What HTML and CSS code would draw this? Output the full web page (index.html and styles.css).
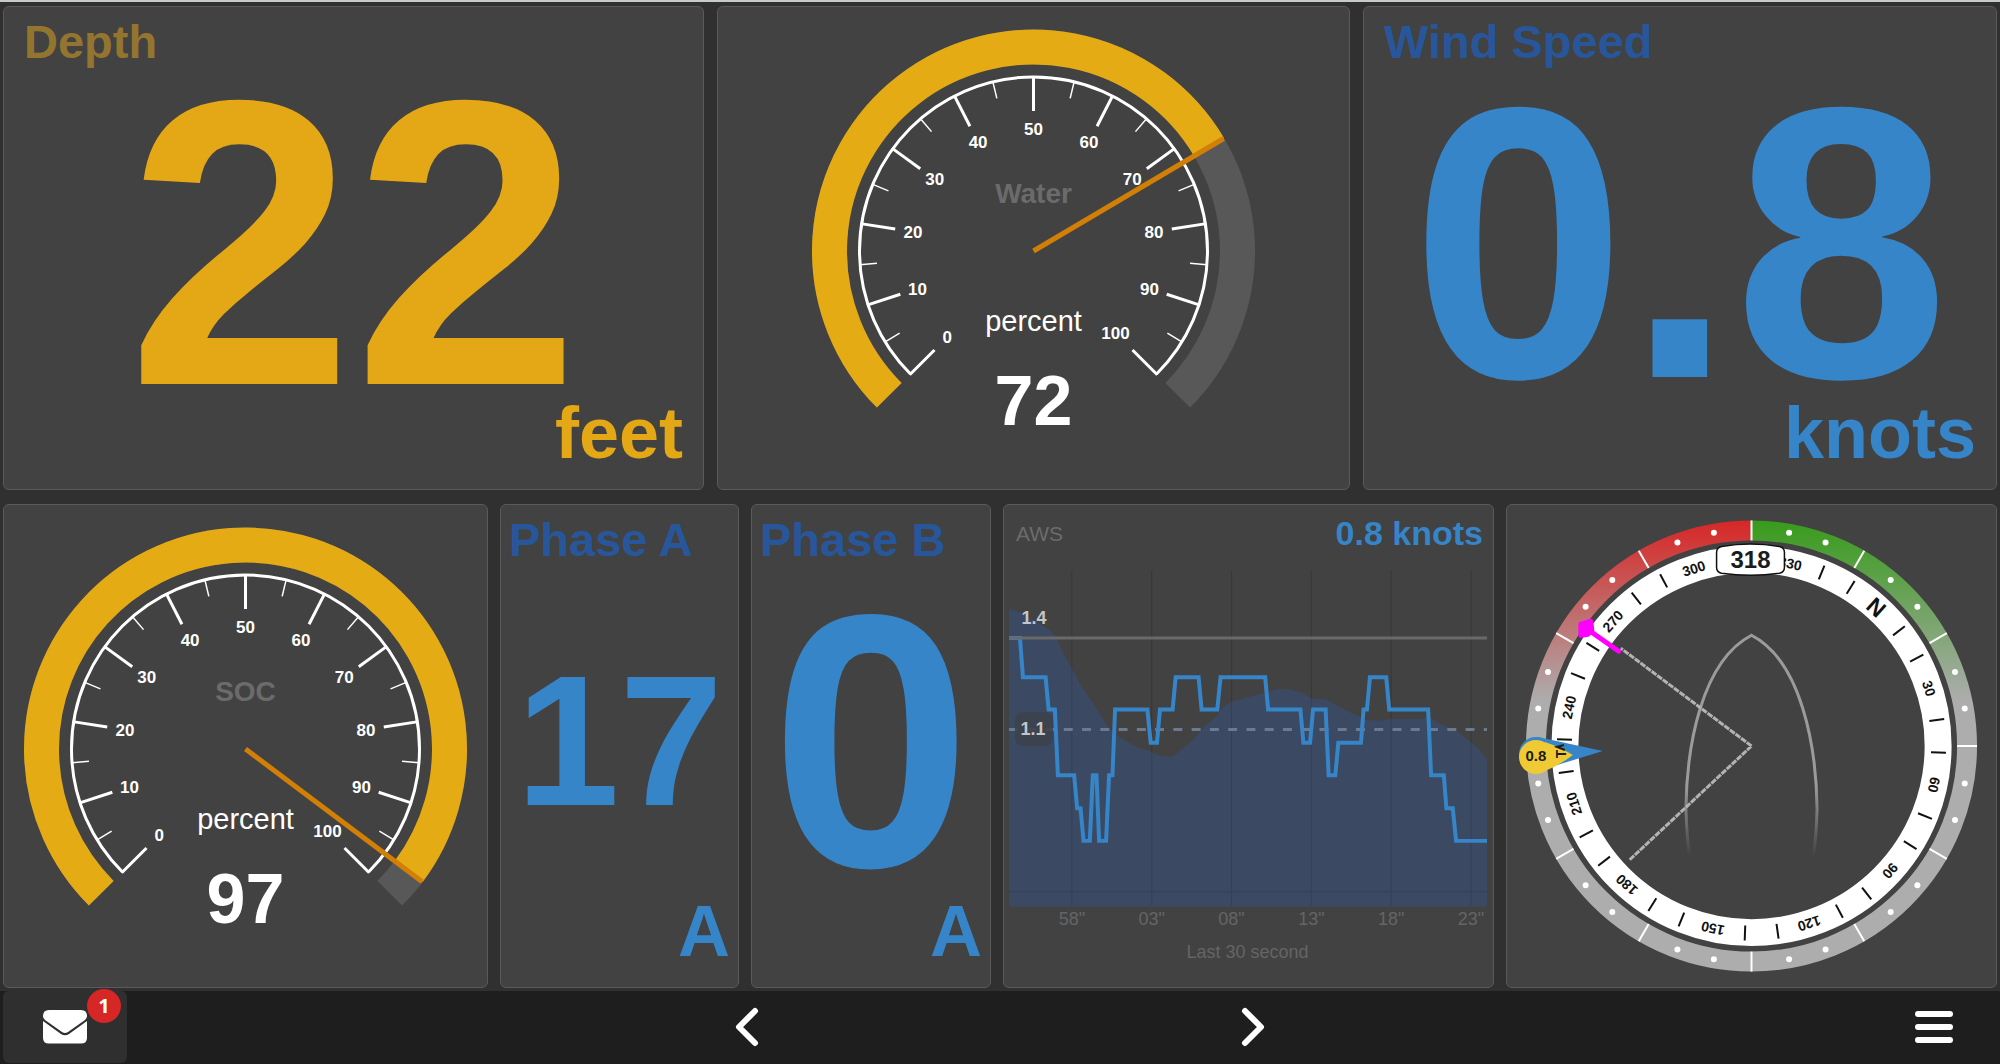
FILE: index.html
```html
<!DOCTYPE html>
<html lang="en">
<head>
    <meta charset="UTF-8">
    <meta name="viewport" content="width=device-width, initial-scale=1.0">
    <title>Boat Dashboard</title>
    <link rel="stylesheet" href="styles.css">
</head>
<body>
    <main class="dashboard">
        <div class="row row-top">
            <section class="tile numeric yellow">
                <h2 class="title">Depth</h2>
                <div class="value value-xl">22</div>
                <div class="unit">feet</div>
            </section>

            <section class="tile">
                <svg class="gauge" viewBox="-241 -244 482 482" data-title="Water" data-value="72"></svg>
            </section>

            <section class="tile numeric blue">
                <h2 class="title">Wind Speed</h2>
                <div class="value value-lg">0.8</div>
                <div class="unit">knots</div>
            </section>
        </div>

        <div class="row row-bottom">
            <section class="tile">
                <svg class="gauge" viewBox="-241 -244 482 482" data-title="SOC" data-value="97"></svg>
            </section>

            <section class="tile numeric small blue">
                <h2 class="title">Phase A</h2>
                <div class="value value-sm">17</div>
                <div class="unit">A</div>
            </section>

            <section class="tile numeric small blue">
                <h2 class="title">Phase B</h2>
                <div class="value value-md">0</div>
                <div class="unit">A</div>
            </section>

            <!-- Apparent wind speed history -->
            <section class="tile chart">
                <header class="chart-header">
                    <h2 class="chart-title">AWS</h2>
                    <span class="chart-value">0.8 knots</span>
                </header>
                <svg class="chart-plot" viewBox="0 0 490 417">
                    <g class="grid-lines">
                        <path d="M68 0V336M148 0V336M228 0V336M308 0V336M388 0V336M468 0V336M5 322H484"/>
                    </g>
                    <path class="area" d="M5 38.7L16 41.7L29 49L42.7 57.7L51 65L59 81.7L68 98.3L79 118L92.7 138L104 156.7L114 165.7L132.7 176.7L146 181L156 185.7L169 186.7L189 170L202.7 154.3L211 148.3L221 135.7L227.7 131.7L262.7 122.3L272.7 119L286 119L297.7 122.3L309.3 128.7L322.7 129L342.7 140L362.7 150L379.3 150.3L387.7 149L417.7 149L424.3 146.7L439.3 155L452.7 160L476 179L484 189V337H5Z"/>
                    <path class="area-grid" d="M68 98V336M148 182V336M228 132V336M308 128V336M388 149V336M468 173V336M5 322H484"/>
                    <path class="avg-line" d="M5 159.3H484"/>
                    <path class="line" d="M5 67.7H16L19 107H41.7L44.7 139.3H51L54 205.3H70.3L73.3 238.3H76.7L79.7 271H86L89 205.3H92.7L95.3 271H102.3L105.3 205.3H108.7L111.3 139.3H143.7L147 172.7H153.3L156.3 139.3H169L172 107H195L198 139.3H213.7L217 107H261.7L264.7 139.3H297L300 172.7H306.7L309.7 139.3H322.3L325.3 205.3H332L335 172.7H357.7L360.3 139.3H363.7L366.7 107H383L386 139.3H425L428 205.3H440.7L443.3 238.3H449.7L453 271H484"/>
                    <path class="max-line" d="M5 67.7H484"/>
                    <rect class="avg-box" x="11" y="142" width="38" height="34" rx="8"/>
                    <text class="mark" x="30" y="54">1.4</text>
                    <text class="mark" x="29" y="165">1.1</text>
                    <g class="axis">
                        <text x="68" y="355">58"</text>
                        <text x="148" y="355">03"</text>
                        <text x="228" y="355">08"</text>
                        <text x="308" y="355">13"</text>
                        <text x="388" y="355">18"</text>
                        <text x="468" y="355">23"</text>
                        <text x="244" y="388">Last 30 second</text>
                    </g>
                </svg>
            </section>

            <!-- Wind steering compass -->
            <section class="tile">
                <svg class="compass" viewBox="-245 -241 490 482">
                    <defs>
                        <linearGradient id="port" x1="0" y1="-227" x2="0" y2="-45" gradientUnits="userSpaceOnUse">
                            <stop offset="0" stop-color="#d72626"/>
                            <stop offset="1" stop-color="#adadad"/>
                        </linearGradient>
                        <linearGradient id="starboard" x1="0" y1="-227" x2="0" y2="-45" gradientUnits="userSpaceOnUse">
                            <stop offset="0" stop-color="#379b1a"/>
                            <stop offset="1" stop-color="#adadad"/>
                        </linearGradient>
                        <linearGradient id="hull" x1="0" y1="40" x2="0" y2="111" gradientUnits="userSpaceOnUse">
                            <stop offset="0" stop-color="#9b9b9b"/>
                            <stop offset="1" stop-color="#9b9b9b" stop-opacity="0"/>
                        </linearGradient>
                    </defs>
                    <path class="ring" stroke="url(#port)" d="M0 -216A216 216 0 0 0 0 216"/>
                    <path class="ring" stroke="url(#starboard)" d="M0 -216A216 216 0 0 1 0 216"/>
                    <g id="ringMarks"></g>
                    <circle class="rose" r="187"/>
                    <g id="roseMarks"></g>
                    <path class="hull" stroke="url(#hull)" d="M-62 111Q-65 90 -65.700 63C-65 0 -50 -85 0 -111C50 -85 65 0 65.700 63Q65 90 62 111"/>
                    <path class="layline" d="M0 0L-131 -98M0 0L-122 114"/>
                    <path class="course-line" d="M-163 -116L-133 -95"/>
                    <path class="course" d="M-171 -122L-161 -125L-160 -116L-164 -112L-171 -111Z"/>
                    <g class="apparent">
                        <circle cx="-216" cy="8" r="17"/>
                        <path d="M-149 5L-214 -9V25Z"/>
                    </g>
                    <g class="true">
                        <circle cx="-216" cy="11" r="17"/>
                        <path d="M-179 9Q-192 1 -207 -4V25Q-192 19 -179 9Z"/>
                    </g>
                    <text class="pin-letter" transform="translate(-191 8) rotate(-90)" dy="5">T</text>
                    <path class="pin-mark" d="M-187 4L-195 1L-188 -1"/>
                    <text class="pin-value" x="-216" y="15">0.8</text>
                    <path class="heading-box" d="M-30 -200Q-1 -205 28 -200Q33 -199 33 -194V-179Q33 -174 28 -173Q-1 -169 -30 -173Q-35 -174 -35 -179V-194Q-35 -199 -30 -200Z"/>
                    <text class="heading" x="-1" y="-178">318</text>
                </svg>
            </section>
        </div>
    </main>

    <footer class="toolbar">
        <button class="mail" aria-label="Notifications">
            <svg class="icon-mail" viewBox="0 0 44 34">
                <path d="M6 0H38Q44 0 44 6Q44 8 42 10L25 22Q22 24 19 22L2 10Q0 8 0 6Q0 0 6 0Z"/>
                <path d="M0 11L18 24Q22 26.500 26 24L44 11V28Q44 33.500 38 33.500H6Q0 33.500 0 28Z"/>
            </svg>
            <span class="badge">1</span>
        </button>
        <button class="nav" aria-label="Previous page">
            <svg class="icon-arrow" viewBox="0 0 24 40"><path d="M20 4L4 20L20 36"/></svg>
        </button>
        <button class="nav" aria-label="Next page">
            <svg class="icon-arrow" viewBox="0 0 24 40"><path d="M4 4L20 20L4 36"/></svg>
        </button>
        <button class="menu" aria-label="Menu">
            <svg class="icon-menu" viewBox="0 0 38 34"><path d="M3 4H35M3 17H35M3 30H35"/></svg>
        </button>
    </footer>

    <script src="script.js"></script>
</body>
</html>
```

FILE: styles.css
```css
* {
    box-sizing: border-box;
}

body {
    margin: 0;
    min-height: 100vh;
    display: flex;
    flex-direction: column;
    background: #303030;
    border-top: 2px solid #c4cbca;
    font-family: "Liberation Sans", Arial, Helvetica, sans-serif;
    color: #ffffff;
}

h2 {
    margin: 0;
}

/* Dashboard layout */
.dashboard {
    flex: 1;
    display: grid;
    grid-template-rows: 1fr 1fr;
    gap: 14px;
    padding: 4px 3px 3px;
}

.row {
    display: grid;
    min-height: 0;
}

.row-top {
    grid-template-columns: 701fr 633fr 634fr;
    gap: 13px;
}

.row-bottom {
    grid-template-columns: 485fr 239fr 240fr 491fr 491fr;
    gap: 12px;
}

.tile {
    display: flex;
    flex-direction: column;
    min-width: 0;
    min-height: 0;
    background: #424242;
    border: 1px solid #5a5a5a;
    border-radius: 6px;
}

.tile > svg {
    display: block;
    flex: 1 1 0;
    width: 100%;
    min-height: 0;
}

/* Numeric tiles, the three texts share one cell */
.numeric {
    display: grid;
    padding: 10px 20px 20px;
    font-weight: bold;
}

.numeric > * {
    grid-area: 1 / 1;
}

.numeric.small {
    padding: 10px 8px 20px;
}

.title {
    align-self: start;
    font-size: 47px;
    line-height: 50px;
}

.value {
    place-self: center;
    line-height: 1;
}

.value-xl {
    font-size: 407px;
}

.value-lg {
    font-size: 387px;
}

.value-md {
    font-size: 361px;
}

.value-sm {
    font-size: 186px;
}

.unit {
    place-self: end;
    font-size: 72px;
    line-height: 72px;
}

.yellow {
    color: #e4a716;
}

.yellow .title {
    color: #94752f;
}

.blue {
    color: #3685c9;
}

.blue .title {
    color: #28569b;
}

/* Gauges */
.gauge text {
    fill: #ffffff;
    text-anchor: middle;
}

.gauge .band {
    fill: none;
    stroke: #585858;
    stroke-width: 35;
}

.gauge .band-value {
    fill: none;
    stroke: #e4ab14;
    stroke-width: 35;
}

.gauge .scale,
.gauge .major {
    fill: none;
    stroke: #ffffff;
    stroke-width: 3;
}

.gauge .minor {
    stroke: #ffffff;
    stroke-width: 1.5;
}

.gauge .needle {
    stroke: #d17f06;
    stroke-width: 5;
}

.gauge .label {
    font-size: 17px;
    font-weight: bold;
}

.gauge .gauge-title {
    font-size: 28px;
    font-weight: bold;
    fill: #6b6b6b;
}

.gauge .gauge-unit {
    font-size: 29px;
}

.gauge .gauge-value {
    font-size: 70px;
    font-weight: bold;
}

/* Chart */
.chart-header {
    display: flex;
    justify-content: space-between;
    align-items: center;
    height: 65px;
    padding: 10px 10px 18px 12px;
}

.chart-title {
    font-size: 21px;
    font-weight: normal;
    color: #6b6b6b;
}

.chart-value {
    font-size: 34px;
    font-weight: bold;
    color: #3685c9;
}

.grid-lines {
    stroke: #383838;
    stroke-width: 1;
}

.area {
    fill: #3b4962;
}

.area-grid {
    fill: none;
    stroke: #33415a;
}

.line {
    fill: none;
    stroke: #3685c9;
    stroke-width: 4;
}

.max-line {
    stroke: #6a6868;
    stroke-width: 3;
}

.avg-line {
    stroke: #6b7a8f;
    stroke-width: 3;
    stroke-dasharray: 9 9.3;
}

.avg-box {
    fill: #3d434c;
    opacity: 0.9;
}

.mark {
    font-size: 18px;
    font-weight: bold;
    fill: #c3c6ca;
    text-anchor: middle;
}

.axis {
    font-size: 18px;
    fill: #656565;
    text-anchor: middle;
}

/* Compass */
.ring {
    fill: none;
    stroke-width: 20;
}

.ring-tick {
    stroke: #ffffff;
    stroke-width: 2;
}

.ring-dot {
    fill: #ffffff;
}

.rose {
    fill: none;
    stroke: #ffffff;
    stroke-width: 27;
}

.rose-tick {
    stroke: #111111;
    stroke-width: 2;
}

.rose-label {
    font-size: 14px;
    font-weight: bold;
    fill: #111111;
    text-anchor: middle;
}

.rose-north {
    font-size: 23px;
}

.hull {
    fill: none;
    stroke-width: 3;
}

.layline {
    fill: none;
    stroke: #b3b3b3;
    stroke-width: 3;
    stroke-dasharray: 6 1;
}

.course-line {
    stroke: #ff00ff;
    stroke-width: 5;
    stroke-linecap: round;
}

.course {
    fill: #ff00ff;
    stroke: #ff00ff;
    stroke-width: 5;
    stroke-linejoin: round;
}

.apparent {
    fill: #3685c9;
}

.true {
    fill: #efca34;
}

.pin-letter {
    font-size: 14px;
    font-weight: bold;
    fill: #1c1c1c;
    text-anchor: middle;
}

.pin-mark {
    fill: none;
    stroke: #1c1c1c;
    stroke-width: 2;
}

.pin-value {
    font-size: 15px;
    font-weight: bold;
    fill: #1c1c1c;
    text-anchor: middle;
}

.heading-box {
    fill: #ffffff;
    stroke: #111111;
    stroke-width: 1.5;
}

.heading {
    font-size: 24px;
    font-weight: bold;
    fill: #1c1c1c;
    text-anchor: middle;
}

/* Bottom toolbar */
.toolbar {
    display: grid;
    grid-template-columns: 491fr 506fr 506fr 491fr;
    height: 73px;
    padding: 0 3px 1px;
    background: #1e1e1e;
}

.toolbar button {
    display: flex;
    justify-content: center;
    align-items: center;
    padding: 0;
    border: none;
    background: none;
    cursor: pointer;
}

.toolbar svg {
    fill: none;
    stroke: #ffffff;
    stroke-width: 6;
    stroke-linecap: round;
    stroke-linejoin: round;
}

.toolbar .mail {
    position: relative;
    width: 124px;
    border-radius: 6px;
    background: #2f2f2f;
}

.toolbar .icon-mail {
    width: 44px;
    height: 34px;
    fill: #ffffff;
    stroke: none;
}

.badge {
    position: absolute;
    top: -2px;
    right: 6px;
    width: 34px;
    border-radius: 17px;
    background: #d62626;
    color: #ffffff;
    font-family: "Open Sans", "Noto Sans", sans-serif;
    font-size: 20px;
    font-weight: bold;
    line-height: 34px;
    text-align: center;
}

.icon-arrow {
    width: 24px;
    height: 40px;
}

.toolbar .menu {
    justify-self: end;
    width: 127px;
}

.icon-menu {
    width: 38px;
    height: 34px;
}
```

FILE: script.js
```js
const SVG_NS = 'http://www.w3.org/2000/svg';

function add(parent, name, attrs, text) {
    const el = document.createElementNS(SVG_NS, name);
    Object.keys(attrs).forEach(key => el.setAttribute(key, attrs[key]));
    if (text !== undefined) el.textContent = text;
    parent.appendChild(el);
}

// Point on a circle, 0 degrees is up and angles run clockwise
function polar(r, deg) {
    const rad = deg * Math.PI / 180;
    return [r * Math.sin(rad), -r * Math.cos(rad)];
}

function arc(r, from, to) {
    const [x1, y1] = polar(r, from);
    const [x2, y2] = polar(r, to);
    const large = to - from > 180 ? 1 : 0;
    return `M${x1} ${y1}A${r} ${r} 0 ${large} 1 ${x2} ${y2}`;
}

function radial(parent, cls, deg, r1, r2) {
    const [x1, y1] = polar(r1, deg);
    const [x2, y2] = polar(r2, deg);
    add(parent, 'line', { class: cls, x1, y1, x2, y2 });
}

// Gauges
document.querySelectorAll('.gauge').forEach(svg => {
    const value = Number(svg.dataset.value);
    const angle = -135 + value * 2.7;

    add(svg, 'path', { class: 'band', d: arc(204, -135, 135) });
    add(svg, 'path', { class: 'band-value', d: arc(204, -135, angle) });
    add(svg, 'path', { class: 'scale', d: arc(174, -135, 135) });

    for (let v = 0; v <= 100; v += 10) {
        const deg = -135 + v * 2.7;
        radial(svg, 'major', deg, 175, 140);
        if (v < 100) radial(svg, 'minor', deg + 13.5, 174, 157);
        const [x, y] = polar(v === 100 ? 116 : 122, deg);
        add(svg, 'text', { class: 'label', x, y: y + 6 }, v);
    }

    add(svg, 'text', { class: 'gauge-title', x: 0, y: -48 }, svg.dataset.title);
    add(svg, 'text', { class: 'gauge-unit', x: 0, y: 80 }, 'percent');
    add(svg, 'text', { class: 'gauge-value', x: 0, y: 174 }, value);
    radial(svg, 'needle', angle, 0, 221);
});

// Compass
const heading = 318;
const ringMarks = document.getElementById('ringMarks');
const roseMarks = document.getElementById('roseMarks');

for (let deg = 0; deg < 360; deg += 10) {
    if (deg % 30 === 0) {
        radial(ringMarks, 'ring-tick', deg, 206, 226);
        add(roseMarks, 'text', {
            class: deg === 0 ? 'rose-label rose-north' : 'rose-label',
            y: deg === 0 ? -179 : -182,
            transform: `rotate(${deg - heading})`
        }, deg === 0 ? 'N' : deg);
    } else {
        const [cx, cy] = polar(217, deg);
        add(ringMarks, 'circle', { class: 'ring-dot', cx, cy, r: 3 });
        radial(roseMarks, 'rose-tick', deg - heading, 180, 195);
    }
}
```
